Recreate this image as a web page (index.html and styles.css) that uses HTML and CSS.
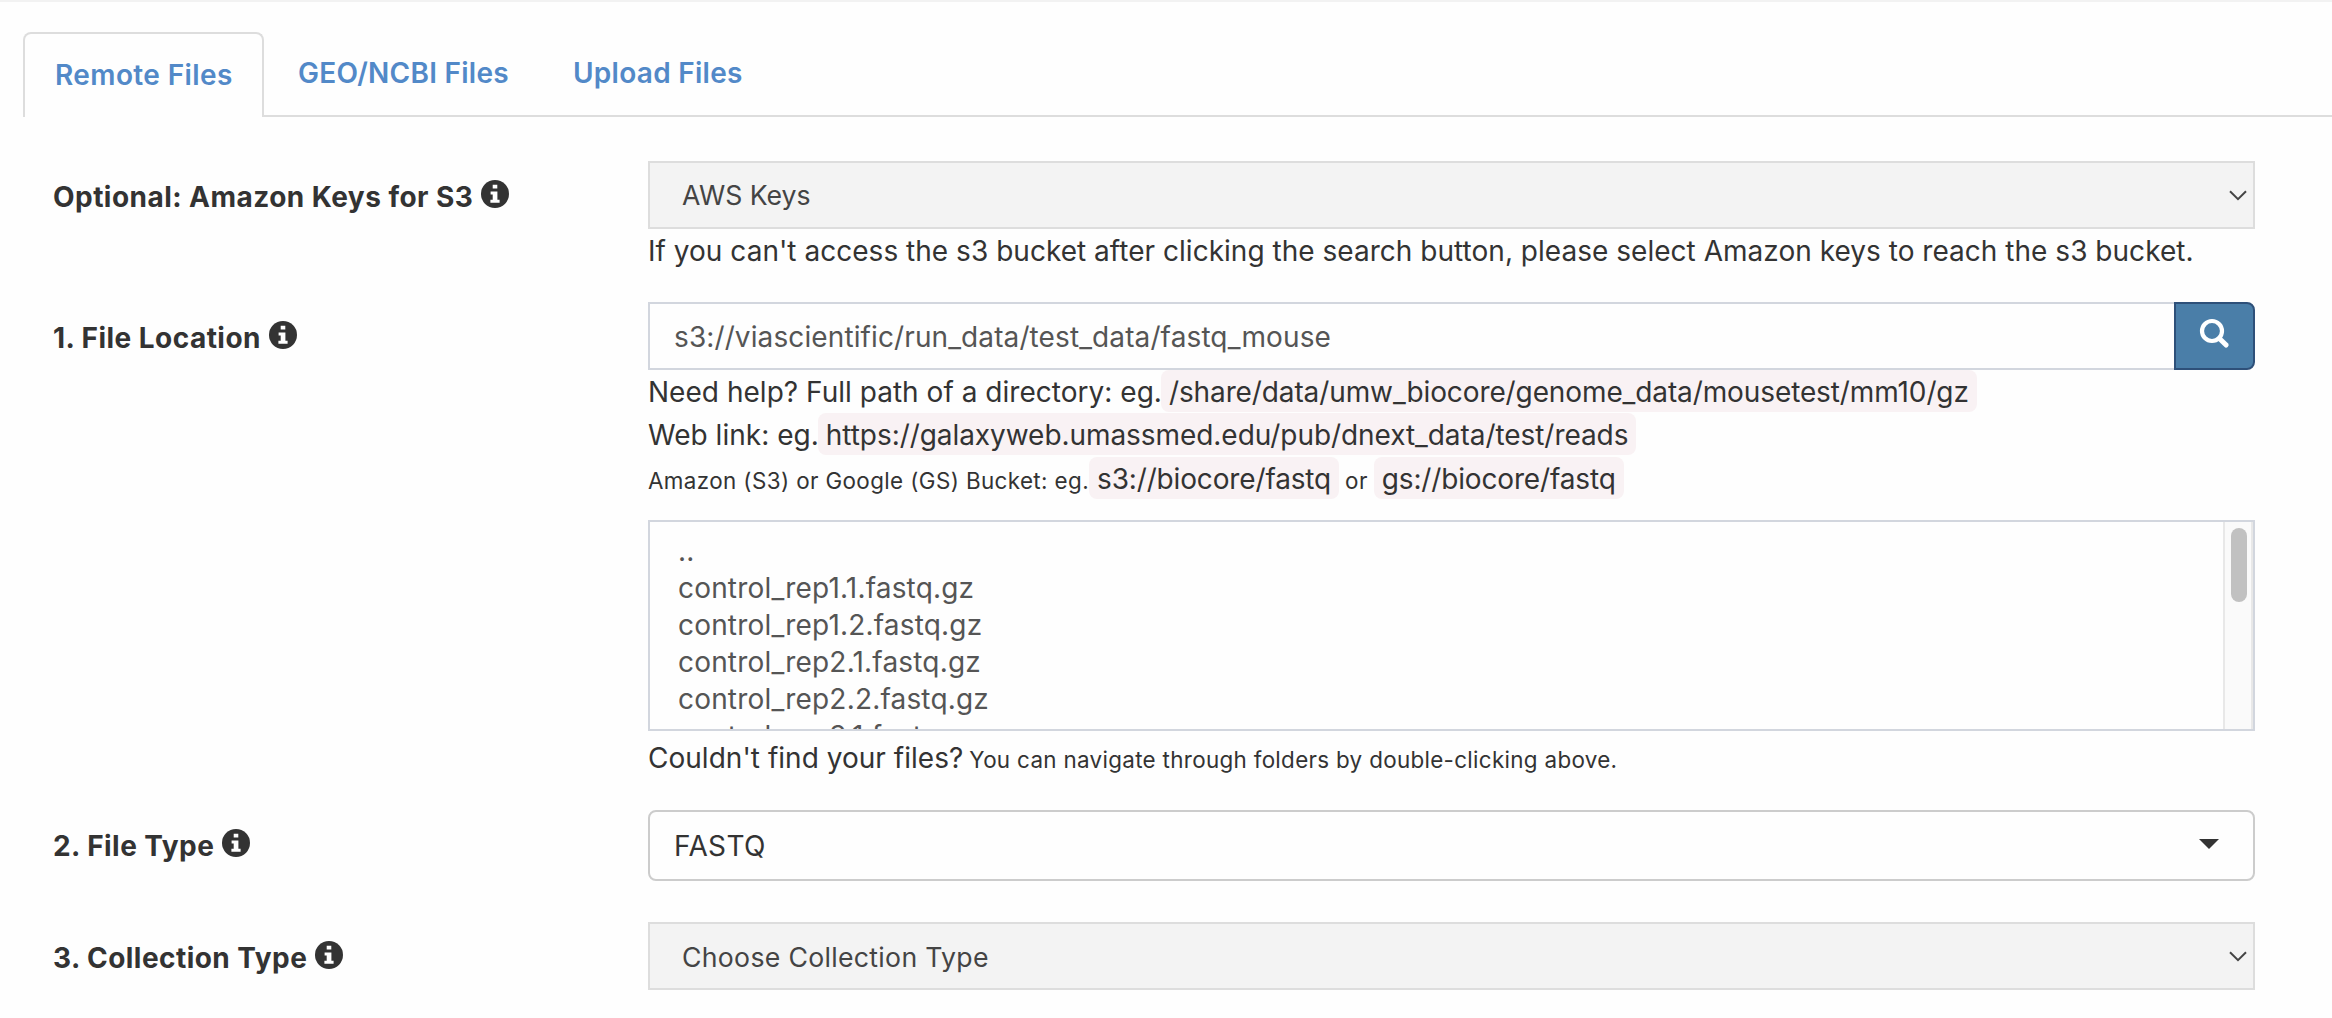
FILE: index.html
```
<!DOCTYPE html>
<html lang="en">
<head>
<meta charset="utf-8">
<title>Add Files</title>
<link rel="stylesheet" href="styles.css">
</head>
<body>
<svg class="defs" width="0" height="0" aria-hidden="true">
  <symbol id="info" viewBox="0 0 28 28">
    <circle cx="14" cy="14" r="14"/>
    <path fill="#fff" d="M11.7 4.7h4.6v3.7h-4.6zM9.6 11.4h6.8v8.3h2.2v3H9.4v-3h2.3v-5.3H9.6z"/>
  </symbol>
  <symbol id="chevron" viewBox="0 0 18 11">
    <path d="M1 1.2l8 8 8-8" fill="none" stroke="#444" stroke-width="2"/>
  </symbol>
</svg>

<nav class="tabs">
  <a class="tab tab-active">Remote Files</a>
  <a class="tab tab-geo">GEO/NCBI Files</a>
  <a class="tab">Upload Files</a>
</nav>

<form class="form">
  <div class="row row-keys">
    <div class="label">Optional: Amazon Keys for S3<svg class="info"><use href="#info"/></svg></div>
    <div class="field">
      <div class="select">AWS Keys<svg class="chevron"><use href="#chevron"/></svg></div>
      <p class="help help-keys">If you can't access the s3 bucket after clicking the search button, please select Amazon keys to reach the s3 bucket.</p>
    </div>
  </div>

  <div class="row row-location">
    <div class="label">1. File Location<svg class="info"><use href="#info"/></svg></div>
    <div class="field">
      <div class="search">
        <div class="input">s3://viascientific/run_data/test_data/fastq_mouse</div>
        <div class="search-btn">
          <svg width="32" height="32" viewBox="0 0 32 32" fill="none" stroke="#fff"><circle cx="13" cy="13" r="10" stroke-width="4.2"/><path d="M20.4 20.4l6.7 6.7" stroke-width="5" stroke-linecap="round"/></svg>
        </div>
      </div>
      <p class="help">Need help? Full path of a directory: eg.<code class="path">/share/data/umw_biocore/genome_data/mousetest/mm10/gz</code></p>
      <p class="help">Web link: eg.<code class="url">https://galaxyweb.umassmed.edu/pub/dnext_data/test/reads</code></p>
      <p class="help help-bucket"><small>Amazon (S3) or Google (GS) Bucket: eg.</small><code class="bucket">s3://biocore/fastq</code><small class="or">or</small><code class="bucket">gs://biocore/fastq</code></p>
      <div class="files">
        <ul class="file-list">
          <li>..</li>
          <li>control_rep1.1.fastq.gz</li>
          <li>control_rep1.2.fastq.gz</li>
          <li>control_rep2.1.fastq.gz</li>
          <li>control_rep2.2.fastq.gz</li>
          <li>control_rep3.1.fastq.gz</li>
        </ul>
        <div class="scrollbar"><div class="thumb"></div></div>
      </div>
      <p class="help help-files">Couldn't find your files?<small class="navigate">You can navigate through folders by double-clicking above.</small></p>
    </div>
  </div>

  <div class="row row-type">
    <div class="label">2. File Type<svg class="info"><use href="#info"/></svg></div>
    <div class="field">
      <div class="dropdown"><span class="value">FASTQ</span><span class="caret"></span></div>
    </div>
  </div>

  <div class="row">
    <div class="label">3. Collection Type<svg class="info"><use href="#info"/></svg></div>
    <div class="field">
      <div class="select select-collection"><span class="value">Choose Collection Type</span><svg class="chevron"><use href="#chevron"/></svg></div>
    </div>
  </div>
</form>
</body>
</html>
```
FILE: styles.css
```
* { box-sizing: border-box; }

body {
  margin: 0;
  height: 1018px;
  overflow: hidden;
  border-top: 2px solid #f2f2f2;
  background: #fefefe;
  color: #333;
  font: 28px/43px Inter, "Liberation Sans", sans-serif;
  white-space: nowrap;
}

.defs { display: block; }

/* Tabs */
.tabs {
  display: flex;
  height: 85px;
  margin: 30px 0 0 23px;
  border-bottom: 2px solid #ddd;
}
.tab {
  color: #5289c8;
  font-weight: 600;
  line-height: 82px;
  letter-spacing: 0.27px;
  padding-left: 34px;
}
.tab-active {
  width: 241px;
  height: 85px;
  padding-left: 30px;
  border: 2px solid #ddd;
  border-bottom: 0;
  border-radius: 8px 8px 0 0;
  background: #fefefe;
  letter-spacing: 0.4px;
}
.tab-geo { width: 275px; }

/* Form rows */
.form { margin: 44px 77px 0 53px; }
.row {
  display: grid;
  grid-template-columns: 595px 1607px;
}
.row-keys { height: 141px; }
.row-location { height: 508px; }
.row-type { height: 112px; }

.label {
  padding-top: 2px;
  font-weight: 700;
  line-height: 68px;
  letter-spacing: 0.46px;
}
.info {
  width: 28px;
  height: 28px;
  margin-left: 8px;
  vertical-align: -1px;
  fill: #333;
}

.select {
  display: flex;
  align-items: center;
  justify-content: space-between;
  height: 68px;
  padding: 0 6px 0 32px;
  border: 2px solid #ddd;
  background: #f3f3f3;
  color: #444;
  font-size: 26.67px;
}
.select-collection { letter-spacing: 0.3px; }
.chevron { width: 18px; height: 11px; }
.value { padding-top: 2px; }

.search { display: flex; height: 68px; }
.input {
  flex: 1;
  padding: 1px 0 0 24px;
  border: 2px solid #d2d6de;
  border-right: 0;
  color: #555;
  line-height: 64px;
  letter-spacing: 0.11px;
}
.search-btn {
  width: 81px;
  padding: 14px 0 0 23px;
  border: 2px solid #2e5079;
  border-radius: 0 8px 8px 0;
  background: #4a7ea8;
  line-height: 0;
}

/* Help text */
.help { margin: 0; height: 43px; padding-top: 1px; letter-spacing: 0.025px; }
.help-bucket { height: 64px; padding-top: 2px; }
.help-files { padding-top: 6px; }
small { font-size: 22.4px; letter-spacing: 0.39px; }
.or { margin: 0 6px; }
.navigate { margin-left: 6px; letter-spacing: 0.32px; }

code {
  padding: 5px 8px 3px;
  border-radius: 8px;
  background: #f9f2f4;
  font-family: inherit;
}
.path { margin-left: -1px; letter-spacing: -0.11px; }
.url { margin-left: -1px; letter-spacing: -0.06px; }
.bucket { letter-spacing: -0.15px; }

/* File browser */
.files {
  display: flex;
  height: 211px;
  border: 2px solid #d2d6de;
  overflow: hidden;
}
.file-list {
  flex: 1;
  margin: 0;
  padding: 11px 0 0 28px;
  list-style: none;
  color: #555;
  line-height: 37px;
  letter-spacing: 0.18px;
}
.scrollbar {
  width: 30px;
  padding: 6px;
  border: solid #e8e8e8;
  border-width: 0 2px;
  background: #fafafa;
}
.thumb {
  width: 16px;
  height: 74px;
  border-radius: 8px;
  background: #c1c1c1;
}

.dropdown {
  display: flex;
  align-items: center;
  justify-content: space-between;
  height: 71px;
  padding: 0 34px 0 24px;
  border: 2px solid #ccc;
  border-radius: 8px;
  letter-spacing: 0.4px;
}
.caret {
  border: solid transparent;
  border-width: 10px 10px 0;
  border-top-color: #333;
  margin-top: -3px;
}
```
